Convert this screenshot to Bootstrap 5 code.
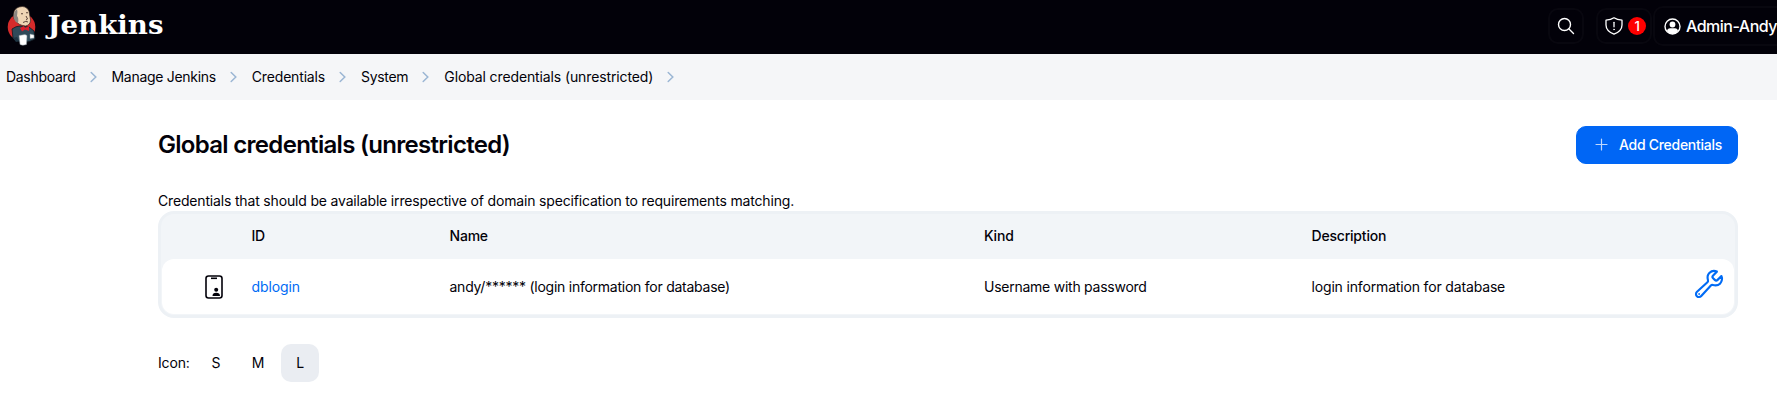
<!DOCTYPE html>
<html lang="en">
<head>
<meta charset="utf-8">
<meta name="viewport" content="width=device-width, initial-scale=1">
<title>Global credentials (unrestricted) [Jenkins]</title>
<link rel="stylesheet" href="https://cdn.jsdelivr.net/npm/bootstrap@5.3.0/dist/css/bootstrap.min.css">
<style>
  body { font-family: Inter, "Liberation Sans", sans-serif; font-size: 14px; line-height: 20px; letter-spacing: -.17px; color: #020109; background: #fff; overflow: hidden; }
  svg { display: block; flex: none; }
  .top-bar { height: 54px; background: #020109; padding: 0 0 2px 6px; }
  .hbtn { height: 36px; border: 2px solid #08070f; border-radius: 10px; color: #fff; }
  .hbtn-search { width: 36px; }
  .hbtn-alert { width: 56px; margin-left: 12px; padding-left: 7px; gap: 5px; }
  .hbtn-user { height: 40px; width: 140px; margin-left: 1px; margin-right: -16px; padding-left: 9px; gap: 5px; font-size: 16px; font-weight: 500; letter-spacing: -.5px; white-space: nowrap; }
  .alert-count { width: 18px; height: 18px; background: #fe0000; font-size: 13px; font-weight: 500; }
  .crumbs { height: 46px; background: #f5f6f8; padding-left: 6px; margin: 0; }
  .crumbs li { display: flex; align-items: center; }
  .crumbs svg { margin: 0 15px 0 14px; color: #9bb6d4; }
  .crumbs .tight { letter-spacing: -.3px; }
  .crumbs .loose { letter-spacing: -.12px; }
  .page { padding: 26px 39px 0 158px; }
  .page-title { font-size: 24px; font-weight: 600; letter-spacing: -.7px; line-height: 38px; }
  .btn-add { --bs-btn-bg: #0066f5; --bs-btn-border-color: #0066f5; --bs-btn-color: #fff; width: 162px; height: 38px; border-radius: 10px; font-size: 14px; font-weight: 500; letter-spacing: -.28px; padding: 0 0 1px 18px; gap: 11px; }
  .cred-table { border: 3px solid #edf1f5; border-radius: 16px; background: #f2f5f8; height: 107px; padding: 0 1px 1px; }
  .trow { display: grid; grid-template-columns: 89.5px 198px 534.5px 327.5px 1fr; align-items: center; letter-spacing: -.25px; }
  .trow-head { height: 45px; font-weight: 500; padding-bottom: 1px; letter-spacing: -.2px; }
  .trow-body { height: 55px; background: #fff; border-radius: 12px; }
  .cell-icon { padding-left: 43px; }
  .cell-desc { letter-spacing: -.16px; }
  .link-id { color: #006bf5; text-decoration: none; letter-spacing: -.1px; }
  .wrench { margin: -6px 9px 0 0; }
  .size-label { width: 39px; }
  .size-btn { width: 38px; height: 38px; border-radius: 10px; }
  .size-btn.active { background: #eaedf2; }
</style>
</head>
<body>
<header class="top-bar d-flex align-items-center">
  <a class="d-flex align-items-center text-decoration-none" href="#" aria-label="Jenkins">
    <svg width="170" height="52" viewBox="6 0 170 52">
      <circle cx="21.500" cy="27" r="13.800" fill="#d52b2b"/>
      <path d="M12 29q4-3 8-3l9 1 5 4 1 8q-6 4-13 3-6 0-9-4z" fill="#2f4a59" stroke="#101820" stroke-width=".8"/>
      <path d="M14 19Q12 9 19 7q7-2 10 4l1.500 9q0 5-5 6-8-1-9-5z" fill="#efd5b5" stroke="#3a2b25" stroke-width=".7"/>
      <path d="M14 19q-1-7 3-10 1 3 0 7 2 2 1 7-3-1-4-4z" fill="#8a8580"/>
      <path d="M21 14q1-1 2 0m3-1q1-1 2 0M23 22.500q3-2 5-.5M26 16l1.500 3-1.500 1" fill="none" stroke="#4a332b" stroke-width=".9"/>
      <path d="M20 28l4-2 1 2 4-2v5l-4-1.500-3 2z" fill="#e01c2b"/>
      <path d="M19 35.500l6-1 2 1-.5 9q-4 1.500-6.500 0zM30 34l4 1v3l-4 .5z" fill="#fff" stroke="#8a979f" stroke-width=".5"/>
      <path d="M13 38l4-1 2 4-3 1z" fill="#1d3442"/>
      <text x="47.500" y="34" textLength="116" lengthAdjust="spacingAndGlyphs" font-family="DejaVu Serif, Liberation Serif, serif" font-weight="700" font-size="26.500" letter-spacing="0" fill="#fff">Jenkins</text>
    </svg>
  </a>
  <div class="d-flex align-items-center ms-auto">
    <a class="hbtn hbtn-search d-flex align-items-center justify-content-center" href="#" aria-label="Search">
      <svg width="18" height="18" viewBox="0 0 18 18" fill="none" stroke="currentColor" stroke-width="1.400" stroke-linecap="round"><circle cx="7.500" cy="7.500" r="6"/><path d="M12 12l4.500 4.500"/></svg>
    </a>
    <a class="hbtn hbtn-alert d-flex align-items-center text-decoration-none" href="#" aria-label="Security warnings">
      <svg width="18" height="18" viewBox="0 0 18 18" fill="none" stroke="currentColor" stroke-width="1.300" stroke-linecap="round" stroke-linejoin="round"><path d="M9 .8Q6 3 1 3.200V8q0 6 8 9.200Q17 14 17 8V3.200Q12 3 9 .8z"/><path d="M9 5.300v4.500"/><circle cx="9" cy="12.400" r=".5" fill="currentColor" stroke-width=".6"/></svg>
      <span class="alert-count rounded-circle d-flex align-items-center justify-content-center">1</span>
    </a>
    <a class="hbtn hbtn-user d-flex align-items-center text-decoration-none" href="#">
      <svg width="17" height="17" viewBox="0 0 17 17"><circle cx="8.500" cy="8.500" r="7.500" fill="none" stroke="#fff" stroke-width="1.400"/><circle cx="8.500" cy="6.500" r="2.900" fill="#fff"/><path d="M3 13q.5-2.800 3-2.800h5q2.500 0 3 2.800-2.300 3-5.500 3T3 13z" fill="#fff"/></svg>
      <span>Admin-Andy</span>
    </a>
  </div>
</header>

<nav aria-label="breadcrumb">
  <ol class="crumbs list-unstyled d-flex align-items-center">
    <li class="tight">Dashboard<svg width="7" height="12" viewBox="0 0 7 12" fill="none" stroke="currentColor" stroke-width="1.500" stroke-linecap="round"><path d="M1.200 1.500L5.800 6 1.200 10.500"/></svg></li>
    <li class="tight">Manage Jenkins<svg width="7" height="12" viewBox="0 0 7 12" fill="none" stroke="currentColor" stroke-width="1.500" stroke-linecap="round"><path d="M1.200 1.500L5.800 6 1.200 10.500"/></svg></li>
    <li>Credentials<svg width="7" height="12" viewBox="0 0 7 12" fill="none" stroke="currentColor" stroke-width="1.500" stroke-linecap="round"><path d="M1.200 1.500L5.800 6 1.200 10.500"/></svg></li>
    <li class="tight">System<svg width="7" height="12" viewBox="0 0 7 12" fill="none" stroke="currentColor" stroke-width="1.500" stroke-linecap="round"><path d="M1.200 1.500L5.800 6 1.200 10.500"/></svg></li>
    <li class="loose">Global credentials (unrestricted)<svg width="7" height="12" viewBox="0 0 7 12" fill="none" stroke="currentColor" stroke-width="1.500" stroke-linecap="round"><path d="M1.200 1.500L5.800 6 1.200 10.500"/></svg></li>
  </ol>
</nav>

<main class="page">
  <div class="d-flex align-items-center justify-content-between">
    <h1 class="page-title m-0">Global credentials (unrestricted)</h1>
    <a class="btn btn-primary btn-add d-flex align-items-center" href="#">
      <svg width="13" height="13" viewBox="0 0 13 13" stroke="#fff" stroke-opacity=".75" stroke-width="1.200" stroke-linecap="round"><path d="M6.500 1v11M1 6.500h11"/></svg>
      <span>Add Credentials</span>
    </a>
  </div>
  <p class="m-0" style="padding-top:27px">Credentials that should be available irrespective of domain specification to requirements matching.</p>
  <div class="cred-table" role="table">
    <div class="trow trow-head" role="row">
      <span></span><span>ID</span><span>Name</span><span>Kind</span><span>Description</span>
    </div>
    <div class="trow trow-body" role="row">
      <span class="cell-icon">
        <svg width="18" height="24" viewBox="0 0 18 24"><rect x="1" y="1" width="16" height="22" rx="2.500" fill="none" stroke="#020109" stroke-width="1.600"/><path d="M6 3.300h6" stroke="#020109" stroke-width="1.600"/><circle cx="11.200" cy="14.700" r="2" fill="#020109"/><path d="M7.500 21q0-3.300 3.700-3.300T15 21z" fill="#020109"/></svg>
      </span>
      <span><a class="link-id" href="#">dblogin</a></span>
      <span>andy/****** (login information for database)</span>
      <span>Username with password</span>
      <span class="cell-desc d-flex align-items-center justify-content-between">login information for database
        <a class="link-id wrench" href="#" aria-label="Update">
          <svg width="32" height="32" viewBox="0 0 512 512" fill="none" stroke="currentColor" stroke-width="34" stroke-linecap="round" stroke-linejoin="round"><path d="M393.870 190a32.100 32.100 0 01-45.250 0l-26.570-26.570a32.090 32.090 0 010-45.260L382.190 58a1 1 0 00-.3-1.640c-38.820-16.640-89.150-8.160-121.110 23.570-30.580 30.350-32.320 76-21.120 115.840a31.930 31.930 0 01-9.060 32.080L64 380a48.170 48.170 0 1068 68l153.860-167a31.930 31.930 0 0131.600-9.130c39.540 10.590 84.540 8.600 114.720-21.190 32.490-32 39.500-88.560 23.750-120.930a1 1 0 00-1.600-.26z"/><circle cx="96" cy="416" r="6" fill="currentColor" stroke-width="16"/></svg>
        </a>
      </span>
    </div>
  </div>
  <div class="d-flex align-items-center" style="margin-top:26px">
    <span class="size-label">Icon:</span>
    <div class="d-flex gap-1">
      <span class="size-btn d-flex align-items-center justify-content-center">S</span>
      <span class="size-btn d-flex align-items-center justify-content-center">M</span>
      <span class="size-btn active d-flex align-items-center justify-content-center">L</span>
    </div>
  </div>
</main>
<script src="https://cdn.jsdelivr.net/npm/bootstrap@5.3.0/dist/js/bootstrap.bundle.min.js"></script>
</body>
</html>
